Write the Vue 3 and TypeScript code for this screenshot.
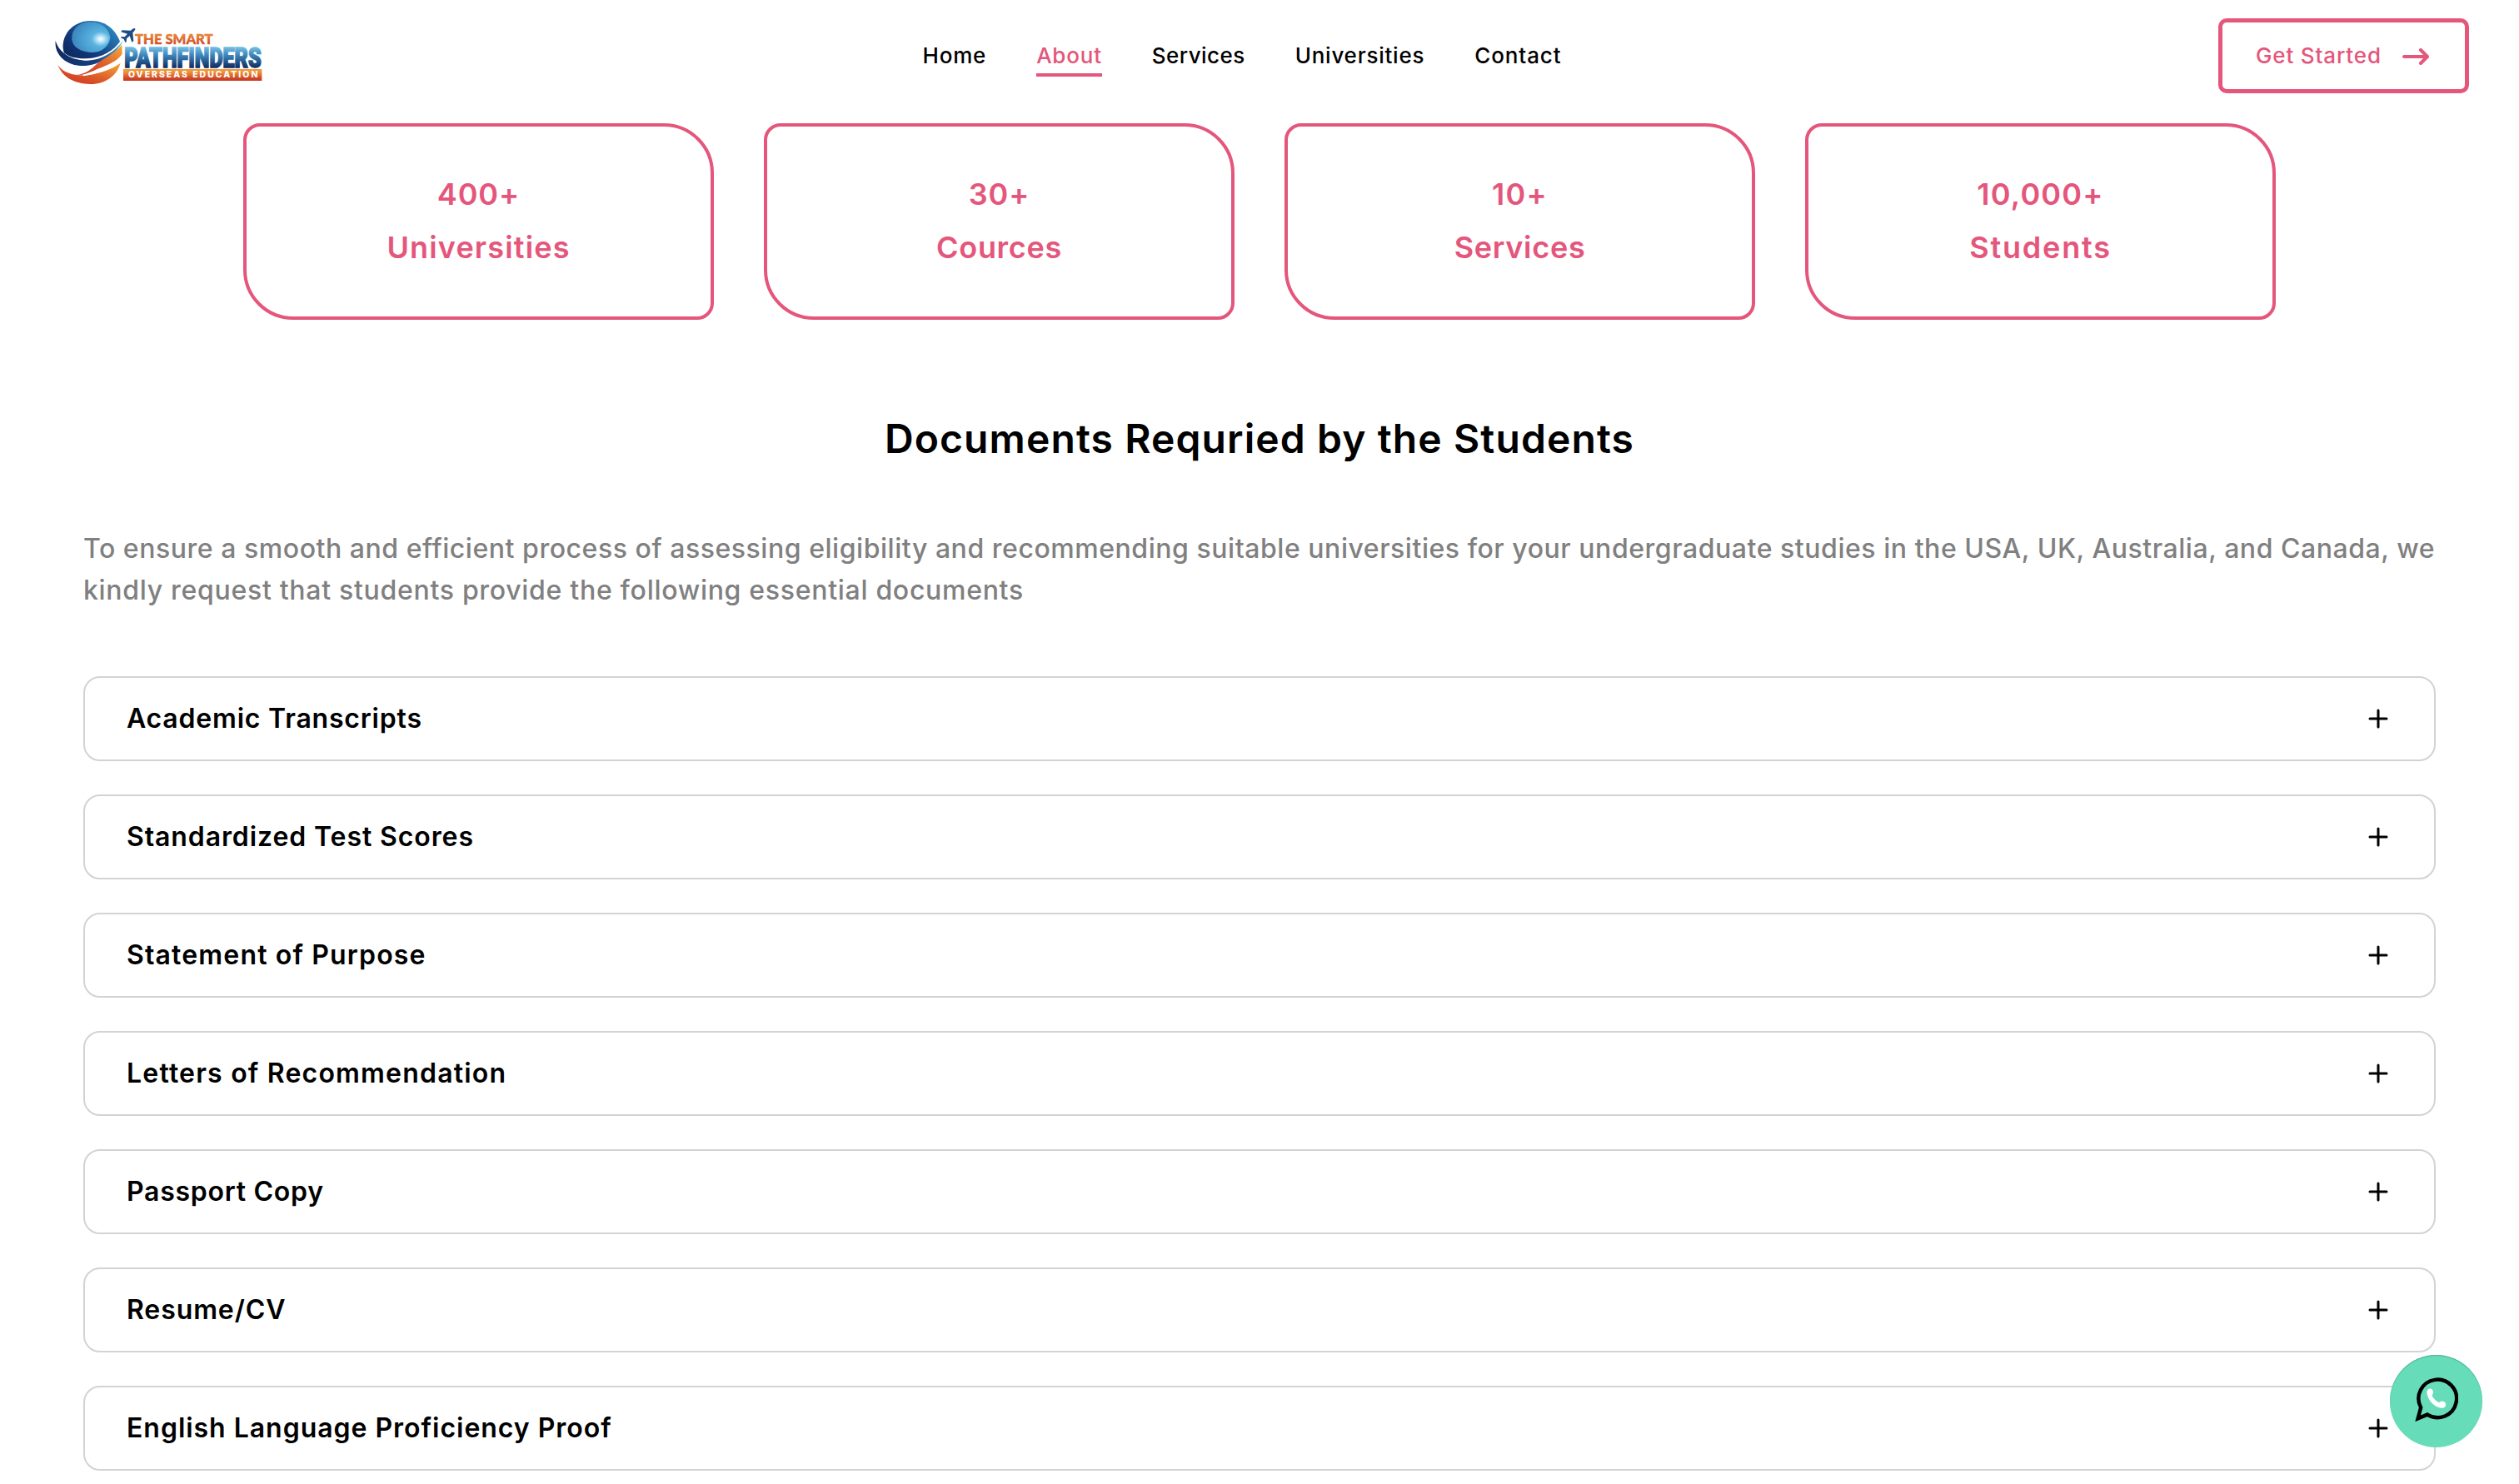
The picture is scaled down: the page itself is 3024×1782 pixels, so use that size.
<script setup lang="ts">
interface Label {
  text: string
  tracking: number
}

interface NavItem extends Label {
  active?: boolean
}

interface Stat {
  value: Label
  label: Label
}

const nav: NavItem[] = [
  { text: 'Home', tracking: 0.8 },
  { text: 'About', tracking: 0.8, active: true },
  { text: 'Services', tracking: 0.45 },
  { text: 'Universities', tracking: 0.75 },
  { text: 'Contact', tracking: 0.9 },
]

const stats: Stat[] = [
  { value: { text: '400+', tracking: 0.9 }, label: { text: 'Universities', tracking: 1.15 } },
  { value: { text: '30+', tracking: 0.9 }, label: { text: 'Cources', tracking: 0.7 } },
  { value: { text: '10+', tracking: 1.2 }, label: { text: 'Services', tracking: 0.7 } },
  { value: { text: '10,000+', tracking: 1.2 }, label: { text: 'Students', tracking: 1.8 } },
]

const intro: Label[] = [
  {
    text: 'To ensure a smooth and efficient process of assessing eligibility and recommending suitable universities for your undergraduate studies in the USA, UK, Australia, and Canada, we',
    tracking: 0.54,
  },
  { text: 'kindly request that students provide the following essential documents', tracking: 0.7 },
]

const documents: Label[] = [
  { text: 'Academic Transcripts', tracking: 0.8 },
  { text: 'Standardized Test Scores', tracking: 0.9 },
  { text: 'Statement of Purpose', tracking: 1.16 },
  { text: 'Letters of Recommendation', tracking: 1.2 },
  { text: 'Passport Copy', tracking: 0.73 },
  { text: 'Resume/CV', tracking: 0.9 },
  { text: 'English Language Proficiency Proof', tracking: 0.97 },
]

const spacing = (l: Label) => ({ letterSpacing: `${l.tracking}px` })
</script>

<template>
  <div class="page">
    <header class="header">
      <svg class="logo" viewBox="30 30 768 261" role="img" aria-label="The Smart Pathfinders Overseas Education">
        <defs>
          <linearGradient id="globe" x1="0" y1="1" x2="1" y2="0.2">
            <stop offset="0" stop-color="#0b2457" />
            <stop offset="0.4" stop-color="#12397c" />
            <stop offset="1" stop-color="#2f8fc6" />
          </linearGradient>
          <radialGradient id="iris" cx="0.75" cy="0.56" r="0.75">
            <stop offset="0" stop-color="#ffffff" />
            <stop offset="0.1" stop-color="#c9ebfb" />
            <stop offset="0.32" stop-color="#58b3e0" />
            <stop offset="1" stop-color="#3a86bd" />
          </radialGradient>
          <linearGradient id="navy" x1="0" y1="0" x2="1" y2="0">
            <stop offset="0" stop-color="#0e2a62" />
            <stop offset="0.6" stop-color="#17407f" />
            <stop offset="1" stop-color="#47a3d2" />
          </linearGradient>
          <linearGradient id="flame" x1="0" y1="1" x2="1" y2="0">
            <stop offset="0" stop-color="#c92c22" />
            <stop offset="0.5" stop-color="#df5f29" />
            <stop offset="1" stop-color="#f3ac3c" />
          </linearGradient>
          <linearGradient id="warm" x1="0" y1="0" x2="0" y2="1">
            <stop offset="0.2" stop-color="#f0993a" />
            <stop offset="0.85" stop-color="#cc3f25" />
          </linearGradient>
          <linearGradient id="cool" x1="0" y1="138" x2="0" y2="215" gradientUnits="userSpaceOnUse">
            <stop offset="0" stop-color="#79c3e6" />
            <stop offset="0.4" stop-color="#3d86bb" />
            <stop offset="1" stop-color="#0c2a60" />
          </linearGradient>
        </defs>
        <path d="M82 163C63 120 95 45 178 45C238 45 268 84 282 119C262 150 220 178 160 181C125 182 96 175 82 163Z" fill="url(#globe)" />
        <path d="M109 112C107 72 137 49 178 49C216 50 244 76 247 106C243 139 214 160 180 159C140 157 111 140 109 112Z" fill="url(#iris)" />
        <path d="M50 116C62 160 108 188 166 188C215 186 262 158 294 116C268 163 222 200 158 207C98 211 44 173 50 116Z" fill="url(#navy)" stroke="#fff" stroke-width="3" paint-order="stroke" />
        <path d="M112 241C150 240 172 226 192 206C212 186 262 164 289 131L290 164C276 188 240 203 205 217C180 228 150 245 112 241Z" fill="url(#flame)" />
        <path d="M58 204C82 240 140 247 184 238C226 228 262 216 284 195C274 243 226 274 176 273C118 271 76 250 58 204Z" fill="url(#flame)" />
        <path d="M150 242C190 236 236 222 283 196" fill="none" stroke="#fff" stroke-width="4" />
        <path d="M337 72C331 71 325 75 321 80L289 79L286 85L309 92L299 103L287 102L285 106L296 111L301 123L305 121L306 109L317 99L325 122L331 118L328 87C333 83 338 78 337 72Z" fill="#1c4b86" />
        <text x="336" y="128" class="logo-top" textLength="281" lengthAdjust="spacingAndGlyphs" fill="url(#warm)" stroke="#df6a2e">THE SMART</text>
        <text x="298" y="213" class="logo-main" textLength="493" lengthAdjust="spacingAndGlyphs" fill="url(#cool)" stroke="url(#cool)">PATHFINDERS</text>
        <rect x="294" y="219" width="499" height="42" fill="url(#warm)" />
        <text x="312" y="250" class="logo-sub" textLength="466" fill="#fff">OVERSEAS EDUCATION</text>
      </svg>

      <nav class="nav">
        <a
          v-for="item in nav"
          :key="item.text"
          class="nav-link"
          :class="{ active: item.active }"
          :style="spacing(item)"
        >{{ item.text }}</a>
      </nav>

      <button class="cta" type="button">
        <span>Get Started</span>
        <svg class="arrow" viewBox="0 0 32 20">
          <path d="M2 10H29M22 2L30 10L22 18" />
        </svg>
      </button>
    </header>

    <section class="stats">
      <article v-for="s in stats" :key="s.label.text" class="stat">
        <span :style="spacing(s.value)">{{ s.value.text }}</span>
        <span :style="spacing(s.label)">{{ s.label.text }}</span>
      </article>
    </section>

    <section class="documents">
      <h2 class="title">Documents Requried by the Students</h2>
      <p class="intro">
        <span v-for="line in intro" :key="line.text" :style="spacing(line)">{{ line.text }}</span>
      </p>
      <div class="list">
        <div v-for="doc in documents" :key="doc.text" class="item">
          <span class="item-name" :style="spacing(doc)">{{ doc.text }}</span>
          <svg class="plus" viewBox="0 0 24 24">
            <path d="M12 2V22M2 12H22" />
          </svg>
        </div>
      </div>
    </section>

    <a class="whatsapp" aria-label="WhatsApp">
      <svg viewBox="0 0 52 54">
        <path class="bubble" d="M3.6 50.4L7.2 37.2A22.8 22.8 0 1 1 15 45.6Z" />
        <path class="phone" d="M14.4 19C14.2 15.5 17 13.8 19.3 14.6C21.7 15.5 22.8 19.2 21.3 21.2C20.2 22.6 20.6 23.5 22 25.2C23.8 27.5 25.6 29.3 27.6 30.6C28.8 31.3 29.5 30.8 30.6 30C33 28.5 36.8 30.3 37.2 33C37.5 36.2 34.8 38.2 31.6 37.8C23.4 36.8 15 28 14.4 19Z" />
      </svg>
    </a>
  </div>
</template>

<style>
body {
  background: #fff;
}
</style>

<style scoped>
.page {
  box-sizing: border-box;
  width: 100%;
  height: 1782px;
  overflow: hidden;
  background: #fff;
  color: #000;
  font-family: Inter, "Liberation Sans", sans-serif;
}

.header {
  display: flex;
  align-items: center;
  justify-content: space-between;
  box-sizing: border-box;
  height: 134px;
  padding: 0 60px;
}

.logo {
  width: 256px;
  height: 87px;
  margin-bottom: 7px;
  overflow: visible;
}

.logo-top {
  font: 900 52px Lato, sans-serif;
  stroke-width: 1.5px;
}

.logo-main {
  font: 900 100px Roboto, sans-serif;
  stroke-width: 5px;
}

.logo-sub {
  font: 800 31px Inter, sans-serif;
}

.nav {
  display: flex;
  gap: 60px;
  margin: 0 0 1px 3px;
}

.nav-link {
  padding: 10px 0 5px;
  border-bottom: 4px solid transparent;
  font-size: 26px;
  font-weight: 450;
  line-height: 32px;
}

.nav-link.active {
  color: #e4567b;
  border-bottom-color: #e4567b;
}

.cta {
  display: flex;
  align-items: center;
  gap: 25px;
  box-sizing: border-box;
  width: 301px;
  height: 90px;
  padding: 0 0 2px 40px;
  border: 5px solid #e4567b;
  border-radius: 10px;
  background: #fff;
  color: #e4567b;
  font: 450 26px Inter, sans-serif;
  letter-spacing: 0.85px;
  white-space: nowrap;
}

.arrow {
  width: 32px;
  height: 20px;
  margin-top: 3px;
}

.arrow path {
  fill: none;
  stroke: currentColor;
  stroke-width: 4;
  stroke-linecap: round;
  stroke-linejoin: round;
}

.stats {
  display: flex;
  gap: 60px;
  padding: 14px 292px 0;
}

.stat {
  display: flex;
  flex: 1;
  flex-direction: column;
  align-items: center;
  justify-content: center;
  box-sizing: border-box;
  height: 236px;
  padding-bottom: 2px;
  border: 4px solid #e4567b;
  border-radius: 20px 60px;
  color: #e4567b;
  font-size: 36px;
  font-weight: 600;
  line-height: 64px;
}

.documents {
  padding: 108px 100px 0;
}

.title {
  margin: 0;
  font-size: 48px;
  font-weight: 600;
  line-height: 70px;
  letter-spacing: 1.1px;
  text-align: center;
}

.intro {
  display: flex;
  flex-direction: column;
  margin: 72px 0 0;
  color: #808080;
  font-size: 32px;
  font-weight: 450;
  line-height: 50px;
  white-space: nowrap;
}

.list {
  display: flex;
  flex-direction: column;
  gap: 40px;
  margin-top: 78px;
}

.item {
  display: flex;
  align-items: center;
  justify-content: space-between;
  box-sizing: border-box;
  height: 102px;
  padding: 0 55px 0 50px;
  border: 2px solid #d3d3d3;
  border-radius: 20px;
  font-size: 32px;
  font-weight: 600;
}

.item-name {
  margin-bottom: 1px;
}

.plus {
  width: 24px;
  height: 24px;
}

.plus path {
  fill: none;
  stroke: #000;
  stroke-width: 3;
  stroke-linecap: round;
}

.whatsapp {
  position: fixed;
  right: 44px;
  bottom: 44px;
  display: flex;
  align-items: center;
  justify-content: center;
  box-sizing: border-box;
  width: 111px;
  height: 111px;
  padding-bottom: 5px;
  border-radius: 50%;
  background: #66dcb8;
  box-shadow: inset 0 1px 1px #4fae95;
}

.whatsapp svg {
  width: 52px;
  height: 54px;
}

.bubble {
  fill: none;
  stroke: #000;
  stroke-width: 4.4;
}

.phone {
  fill: #fff;
}
</style>
